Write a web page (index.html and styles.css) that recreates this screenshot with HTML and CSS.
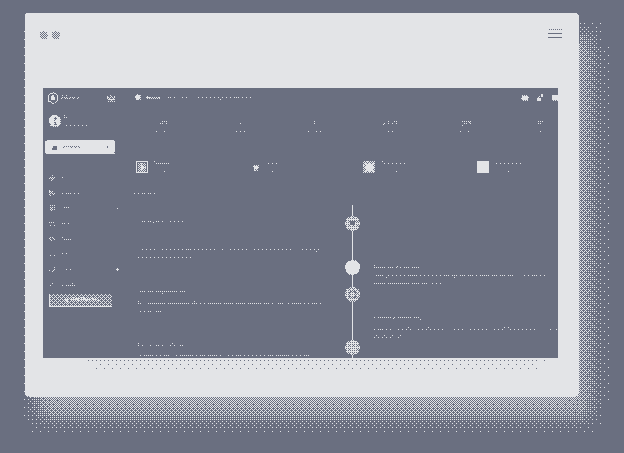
FILE: index.html
```html
<!DOCTYPE html>
<html lang="en">
<head>
    <meta charset="UTF-8">
    <meta name="viewport" content="width=device-width, initial-scale=1.0">
    <title>Adpress Dashboard</title>
    <link rel="stylesheet" href="styles.css">
</head>
<body>
    <!-- 8x8 ordered dither, two colours -->
    <svg class="filter-defs" width="0" height="0">
        <filter id="dither" filterUnits="userSpaceOnUse" x="0" y="0" width="624" height="453" color-interpolation-filters="sRGB">
            <feFlood x="0" y="0" width="2" height="2" flood-color="#000" result="a0"/>
            <feFlood x="1" y="0" width="1" height="1" flood-color="rgb(50%,50%,50%)" result="a1"/>
            <feFlood x="0" y="1" width="1" height="1" flood-color="rgb(75%,75%,75%)" result="a2"/>
            <feFlood x="1" y="1" width="1" height="1" flood-color="rgb(25%,25%,25%)" result="a3"/>
            <feMerge x="0" y="0" width="2" height="2" result="a">
                <feMergeNode in="a0"/><feMergeNode in="a1"/><feMergeNode in="a2"/><feMergeNode in="a3"/>
            </feMerge>
            <feTile in="a" x="0" y="0" width="624" height="453" result="tileA"/>
            <feFlood x="0" y="0" width="4" height="4" flood-color="#000" result="b0"/>
            <feFlood x="2" y="0" width="2" height="2" flood-color="rgb(12.5%,12.5%,12.5%)" result="b1"/>
            <feFlood x="0" y="2" width="2" height="2" flood-color="rgb(18.75%,18.75%,18.75%)" result="b2"/>
            <feFlood x="2" y="2" width="2" height="2" flood-color="rgb(6.25%,6.25%,6.25%)" result="b3"/>
            <feMerge x="0" y="0" width="4" height="4" result="b">
                <feMergeNode in="b0"/><feMergeNode in="b1"/><feMergeNode in="b2"/><feMergeNode in="b3"/>
            </feMerge>
            <feTile in="b" x="0" y="0" width="624" height="453" result="tileB"/>
            <feFlood x="0" y="0" width="8" height="8" flood-color="#000" result="c0"/>
            <feFlood x="4" y="0" width="4" height="4" flood-color="rgb(3.125%,3.125%,3.125%)" result="c1"/>
            <feFlood x="0" y="4" width="4" height="4" flood-color="rgb(4.7%,4.7%,4.7%)" result="c2"/>
            <feFlood x="4" y="4" width="4" height="4" flood-color="rgb(1.6%,1.6%,1.6%)" result="c3"/>
            <feMerge x="0" y="0" width="8" height="8" result="c">
                <feMergeNode in="c0"/><feMergeNode in="c1"/><feMergeNode in="c2"/><feMergeNode in="c3"/>
            </feMerge>
            <feTile in="c" x="0" y="0" width="624" height="453" result="tileC"/>
            <feComposite in="tileA" in2="tileB" operator="arithmetic" k1="0" k2="1" k3="1" k4="0" result="ab"/>
            <feComposite in="ab" in2="tileC" operator="arithmetic" k1="0" k2="1" k3="1" k4="0" result="bayer"/>
            <feColorMatrix in="SourceGraphic" type="matrix" values=".653 1.284 .239 0 -.953 .653 1.284 .239 0 -.953 .653 1.284 .239 0 -.953 0 0 0 1 0" result="level"/>
            <feComposite in="level" in2="bayer" operator="arithmetic" k1="0" k2=".5" k3=".5" k4=".004"/>
            <feComponentTransfer>
                <feFuncR type="discrete" tableValues=".4196 .894"/>
                <feFuncG type="discrete" tableValues=".4353 .898"/>
                <feFuncB type="discrete" tableValues=".502 .906"/>
            </feComponentTransfer>
        </filter>
    </svg>

    <div class="page">
        <div class="window">
            <div class="window-bar">
                <div class="window-dots"><span class="dot"></span><span class="dot"></span></div>
                <div class="burger"><span></span><span></span><span></span></div>
            </div>

            <div class="screen">
                <div class="topbar">
                    <div class="brand">
                        <svg class="brand-icon" viewBox="0 0 10 12"><path d="M5 .5 9.5 3v6L5 11.5.5 9V3z" fill="none" stroke="currentColor"/><path d="M3 8V4.500L5 3l2 1.500V8z" fill="currentColor"/></svg>
                        <span class="brand-name">Adpress</span>
                    </div>
                    <svg class="crown" viewBox="0 0 8 7"><path d="M.5 1 2 3.500 4 .5l2 3L7.500 1v3.500h-7z M.5 6h7" fill="none" stroke="currentColor" stroke-width=".8"/></svg>
                    <div class="search">
                        <svg class="search-icon" viewBox="0 0 8 8"><circle cx="4" cy="3.200" r="2.600" fill="currentColor"/><path d="M6 5.500 7.600 7.400" stroke="currentColor"/></svg>
                        <span class="search-key">Search</span>
                        <span class="search-hint">for results, orders, customers and reports in here today</span>
                    </div>
                    <div class="top-icons">
                        <svg viewBox="0 0 8 6"><rect x="1" y="0.500" width="6" height="5" fill="currentColor"/><path d="M0 3h8" stroke="currentColor"/></svg>
                        <svg viewBox="0 0 8 8"><path d="M1 4h4v3H1z" fill="currentColor"/><path d="M3 2v2" stroke="currentColor"/><rect x="5" y="0" width="2" height="3" fill="currentColor"/></svg>
                        <svg viewBox="0 0 8 8"><rect x="1" y="1" width="6" height="5.500" fill="currentColor"/></svg>
                    </div>
                </div>

                <div class="dash">
                    <aside class="sidebar">
                        <div class="profile">
                            <svg class="avatar" viewBox="0 0 12 12"><circle cx="6" cy="6" r="6" fill="currentColor"/><path d="M5 2.500h3L6 6l2 3.500-3 1 .8-4z" fill="#6b6f80"/></svg>
                            <div class="profile-text">
                                <div class="profile-name">Hey</div>
                                <div class="profile-role">Administrator</div>
                            </div>
                        </div>

                        <div class="nav-active">
                            <svg class="nav-icon" viewBox="0 0 7 7"><path d="M0 3.500 3.500 0 7 3v4H0z" fill="currentColor"/></svg>
                            <span>Dashboard</span>
                            <span class="nav-caret"></span>
                        </div>

                        <ul class="nav">
                            <li><svg class="nav-icon" viewBox="0 0 7 7"><path d="M3.500.5 6 3H1zM.5 4h6M1.500 6h4" fill="none" stroke="currentColor" stroke-width=".9"/></svg><span>Email</span></li>
                            <li><svg class="nav-icon" viewBox="0 0 7 7"><path d="M.5 1h2v5h-2zM5.500.5v6M3.500 2h1M3.500 4h1" fill="none" stroke="currentColor" stroke-width=".8"/></svg><span>Invoice List</span></li>
                            <li><svg class="nav-icon" viewBox="0 0 7 7"><path d="M2 1h4.500v4H2M1 3.500h3M2 6.500h2" fill="none" stroke="currentColor" stroke-width=".8"/></svg><span>Users</span><span class="nav-dot"></span></li>
                            <li><svg class="nav-icon" viewBox="0 0 7 7"><path d="M.5 1.500h6M.5 5h6" fill="none" stroke="currentColor" stroke-dasharray="1.200 1"/></svg><span>Roles</span></li>
                            <li><svg class="nav-icon" viewBox="0 0 7 7"><path d="M3.500.7 6.300 3.500 3.500 6.300.7 3.500z" fill="none" stroke="currentColor" stroke-width=".9"/></svg><span>Pages</span></li>
                            <li><svg class="nav-icon" viewBox="0 0 7 7"><path d="M3.500 2v.8M1 5h1M5.500 5h1" stroke="currentColor" stroke-width=".8"/></svg><span>Auth</span></li>
                            <li><svg class="nav-icon" viewBox="0 0 7 7"><path d="M.5 1v4.500h6V1" fill="none" stroke="currentColor" stroke-width=".6"/></svg><span>Widgets</span><span class="nav-badge"></span></li>
                            <li><svg class="nav-icon" viewBox="0 0 7 7"><path d="M3.500 1v1M1 3.500h1M5 3.500h1M3.500 5v1" stroke="currentColor" stroke-width=".9"/></svg><span>Docs Help</span></li>
                        </ul>

                        <div class="cta">
                            <svg class="cta-icon" viewBox="0 0 7 7"><path d="M0 3.500 6 .5 5 6.500z" fill="currentColor"/></svg>
                            <span>Get Started</span>
                        </div>
                    </aside>

                    <main class="content">
                        <div class="stats">
                            <div class="stat"><div class="stat-tag"></div><div class="stat-num">43</div><div class="stat-label">Total Sales</div></div>
                            <div class="stat"><div class="stat-tag">..</div><div class="stat-num">17</div><div class="stat-label">Refunds</div></div>
                            <div class="stat"><div class="stat-tag"></div><div class="stat-num">7</div><div class="stat-label">New Leads</div></div>
                            <div class="stat"><div class="stat-tag"></div><div class="stat-num">27.3K</div><div class="stat-label">Views</div></div>
                            <div class="stat"><div class="stat-tag">..</div><div class="stat-num">$93</div><div class="stat-label">Daily Sale</div></div>
                            <div class="stat"><div class="stat-tag"></div><div class="stat-num">$23</div><div class="stat-label">Rate</div></div>
                        </div>

                        <div class="cards">
                            <div class="card">
                                <svg class="card-icon" viewBox="0 0 12 12"><rect x=".5" y=".5" width="11" height="11" fill="none" stroke="currentColor"/><rect x="2" y="1.500" width="8" height="9" fill="currentColor" opacity=".55"/><path d="M5 2v8l3-4z" fill="currentColor"/></svg>
                                <div class="card-text"><div>Products</div><div class="card-sub">126</div></div>
                            </div>
                            <div class="card">
                                <svg class="card-icon" viewBox="0 0 12 12"><path d="M3 4.500h6l-.7 3.500H4z" fill="currentColor"/><rect x="4" y="8.500" width="1.500" height="1.500" fill="currentColor"/><rect x="6.500" y="8.500" width="1.500" height="1.500" fill="currentColor"/></svg>
                                <div class="card-text"><div>Orders</div><div class="card-sub">340</div></div>
                            </div>
                            <div class="card">
                                <svg class="card-icon" viewBox="0 0 12 12"><rect width="12" height="12" fill="currentColor" opacity=".6"/><rect x="3" y="3" width="7" height="7" fill="currentColor"/></svg>
                                <div class="card-text"><div>Total Revenue</div><div class="card-sub">$120</div></div>
                            </div>
                            <div class="card">
                                <svg class="card-icon" viewBox="0 0 12 12"><rect width="12" height="12" fill="currentColor"/></svg>
                                <div class="card-text"><div>New Customers</div><div class="card-sub">680</div></div>
                            </div>
                        </div>

                        <h2 class="section-title">Transactions</h2>

                        <div class="timeline">
                            <div class="tl-left">
                                <div class="tl-item tl-first">
                                    <h3>Order was placed today now</h3>
                                    <p class="tl-sub">Just now, two minutes</p>
                                    <p class="tl-body tl-body-wide">Lorem ipsum dolor sit amet consectetur adipiscing elit sed do eiusmod tempor incididunt ut labore et dolore magna aliqua enim ad minim veniam quis</p>
                                </div>
                                <div class="tl-item">
                                    <h3>Order was shipped today now</h3>
                                    <p class="tl-body">Quis nostrud exercitation ullamco laboris nisi ut aliquip ex ea commodo consequat duis aute irure dolor in voluptate velit esse nulla</p>
                                </div>
                                <div class="tl-item">
                                    <h3>Order was placed today now</h3>
                                    <p class="tl-body">Lorem ipsum dolor sit amet consectetur adipiscing elit sed do eiusmod tempor incididunt ut labore et dolore</p>
                                </div>
                            </div>

                            <div class="tl-spine">
                                <div class="node"><svg viewBox="0 0 15 15"><path d="M4 5h7l-1.500 4h-4z" fill="#6b6f80"/></svg></div>
                                <div class="node node-solid"></div>
                                <div class="node"><svg viewBox="0 0 15 15"><circle cx="7.500" cy="7.500" r="3.500" fill="none" stroke="#6b6f80"/></svg></div>
                                <div class="node node-last"></div>
                            </div>

                            <div class="tl-right">
                                <div class="tl-item tl-r1">
                                    <h3>Invoice was sent over today</h3>
                                    <p class="tl-body">Lorem ipsum dolor sit amet consectetur adipiscing elit sed do eiusmod tempor incididunt ut labore et dolore magna aliqua enim ad minim quis nostrud</p>
                                </div>
                                <div class="tl-item tl-r2">
                                    <h3>Payment was received today</h3>
                                    <p class="tl-body">Quis nostrud exercitation ullamco laboris nisi ut aliquip ex ea commodo consequat duis aute irure dolor in velit esse cillum fugiat nulla</p>
                                </div>
                            </div>
                        </div>
                    </main>
                </div>
            </div>
        </div>
    </div>
</body>
</html>
```
FILE: styles.css
```css
* {
    margin: 0;
    padding: 0;
    box-sizing: border-box;
}

body {
    background: #6b6f80;
    font-family: 'Roboto', sans-serif;
    overflow: hidden;
}

.filter-defs {
    position: absolute;
}

.page {
    width: 624px;
    height: 453px;
    padding: 13px 45px 0 25px;
    background: #6b6f80;
    overflow: hidden;
    filter: url(#dither);
    text-rendering: geometricPrecision;
}

.window {
    height: 384px;
    padding: 0 21px 0 18px;
    background: #e4e5e7;
    border-radius: 4px;
    box-shadow: 12px 21px 18px rgba(228, 229, 231, 0.5);
}

.window-bar {
    height: 75px;
    margin: 0 -21px 0 -18px;
    padding: 18px 17px 0 15px;
    display: flex;
    justify-content: space-between;
}

.window-dots {
    display: flex;
    gap: 4px;
}

.dot {
    width: 8px;
    height: 8px;
    border-radius: 50%;
    background: #a6a9b3;
}

.burger {
    width: 14px;
    display: flex;
    flex-direction: column;
    gap: 3px;
    margin-top: -2px;
}

.burger span {
    height: 1px;
    background: #6b6f80;
}

.burger span:first-child {
    opacity: 0.6;
}

.screen {
    height: 270px;
    background: #6b6f80;
    color: #e4e5e7;
    overflow: hidden;
    box-shadow: 14px 35px 8px -31px rgba(107, 111, 128, 0.08);
}

.topbar {
    height: 20px;
    padding-left: 5px;
    display: flex;
    align-items: center;
    font-size: 3.6px;
}

.brand {
    width: 59px;
    display: flex;
    align-items: center;
    gap: 3px;
}

.brand-icon {
    width: 10px;
    height: 12px;
}

.brand-name {
    font-size: 5px;
    font-weight: 400;
    color: #c4c6cd;
}

.crown {
    width: 8px;
    height: 7px;
}

.search {
    margin-left: 19px;
    display: flex;
    align-items: center;
    gap: 4px;
    flex: 1;
}

.search-icon {
    width: 8px;
    height: 8px;
}

.search-key {
    font-size: 4.5px;
    font-weight: 700;
}

.search-hint {
    margin-left: -3px;
    font-size: 3.7px;
    color: #9b9eaa;
}

.top-icons {
    display: flex;
    gap: 7px;
    margin-right: -1px;
}

.top-icons svg {
    width: 8px;
    height: 8px;
}

.dash {
    display: grid;
    grid-template-columns: 83px 1fr;
}

.sidebar {
    padding-top: 7px;
}

.profile {
    padding-left: 6px;
    display: flex;
    gap: 3px;
}

.avatar {
    width: 12px;
    height: 12px;
}

.profile-name {
    font-size: 3.6px;
    line-height: 5px;
    color: #b0b3bd;
}

.profile-role {
    margin: 3px 0 0 2px;
    font-size: 3.6px;
    line-height: 5px;
    color: #9b9eaa;
}

.nav-active {
    width: 70px;
    height: 14px;
    margin: 12px 0 16px 2px;
    padding: 0 7px;
    display: flex;
    align-items: center;
    gap: 6px;
    background: #e4e5e7;
    color: #6b6f80;
    border-radius: 2px;
    font-size: 3.6px;
}

.nav-active .nav-icon {
    width: 5px;
    height: 5px;
    color: #6b6f80;
}

.nav-caret {
    width: 1px;
    height: 2px;
    margin-left: auto;
    background: #6b6f80;
}

.nav {
    list-style: none;
}

.nav li {
    height: 15.3px;
    padding: 0 7px 0 6px;
    display: flex;
    align-items: center;
    gap: 6px;
    font-size: 3.6px;
    color: #a0a3af;
}

.nav-icon {
    width: 6px;
    height: 6px;
    flex: none;
    color: #d0d2d8;
}

.nav-dot {
    width: 1px;
    height: 1px;
    margin-left: auto;
    margin-right: 1px;
    background: #e4e5e7;
}

.nav-badge {
    width: 3px;
    height: 3px;
    margin-left: auto;
    background: #e4e5e7;
    border-radius: 50%;
}

.cta {
    width: 63px;
    height: 13px;
    margin: 2px 0 0 6px;
    display: flex;
    align-items: center;
    justify-content: center;
    gap: 2px;
    border: 1px solid #e4e5e7;
    border-width: 0 0 1px 1px;
    background: rgba(228, 229, 231, 0.38);
    font-size: 5.5px;
    font-weight: 700;
}

.cta-icon {
    width: 6px;
    height: 6px;
}

.content {
    min-width: 0;
}

.stats {
    display: grid;
    grid-template-columns: repeat(6, 75.5px);
    padding-top: 4px;
    text-align: center;
}

.stat-tag {
    height: 6px;
    font-size: 3px;
    line-height: 6px;
}

.stat-num {
    font-size: 6px;
    line-height: 11px;
    color: #a6a9b3;
}

.stat-label {
    font-size: 3.6px;
    line-height: 7px;
    color: #7d8191;
}

.cards {
    display: grid;
    grid-template-columns: repeat(4, 113.5px);
    margin: 25px 0 0 10px;
}

.card {
    height: 12px;
    display: flex;
    align-items: center;
    gap: 6px;
}

.card-icon {
    width: 12px;
    height: 12px;
    flex: none;
}

.card-text {
    font-size: 3.8px;
    line-height: 8.5px;
    text-align: center;
    color: #9b9eaa;
}

.card-sub {
    color: #7d8191;
}

.section-title {
    margin: 19px 0 7px 6px;
    font-size: 4.4px;
    font-weight: 400;
    line-height: 6px;
    color: #a6a9b3;
}

.timeline {
    display: grid;
    grid-template-columns: 208px 15px 1fr;
    margin-left: 11px;
}

.tl-left {
    padding-right: 18px;
}

.tl-right {
    padding-left: 14px;
}

.tl-item {
    margin-top: 27px;
}

.tl-item h3 {
    font-size: 3.8px;
    font-weight: 400;
    line-height: 6px;
    color: #a6a9b3;
}

.tl-first {
    margin-top: 14px;
}

.tl-r1 {
    margin-top: 59px;
}

.tl-sub {
    margin: 6px 0 0 4px;
    font-size: 3.4px;
    line-height: 6px;
    color: #7d8191;
}

.tl-body {
    margin-top: 4px;
    font-size: 3.6px;
    line-height: 8px;
    color: #9b9eaa;
}

.tl-body-wide {
    margin-top: 9px;
}

.tl-r1 .tl-body {
    margin-top: 2px;
}

.tl-spine {
    position: relative;
    padding-top: 11px;
}

.tl-spine::before {
    content: '';
    position: absolute;
    top: 0;
    bottom: 0;
    left: 7px;
    width: 1px;
    background: #e4e5e7;
}

.node {
    position: relative;
    width: 15px;
    height: 15px;
    margin-bottom: 12px;
    border-radius: 50%;
    background: #bfc1c8;
}

.node:first-child {
    margin-bottom: 29px;
}

.node-solid {
    background: #e4e5e7;
}

.node:nth-child(3) {
    margin-bottom: 38px;
}

.node svg {
    display: block;
    width: 15px;
    height: 15px;
}
```
